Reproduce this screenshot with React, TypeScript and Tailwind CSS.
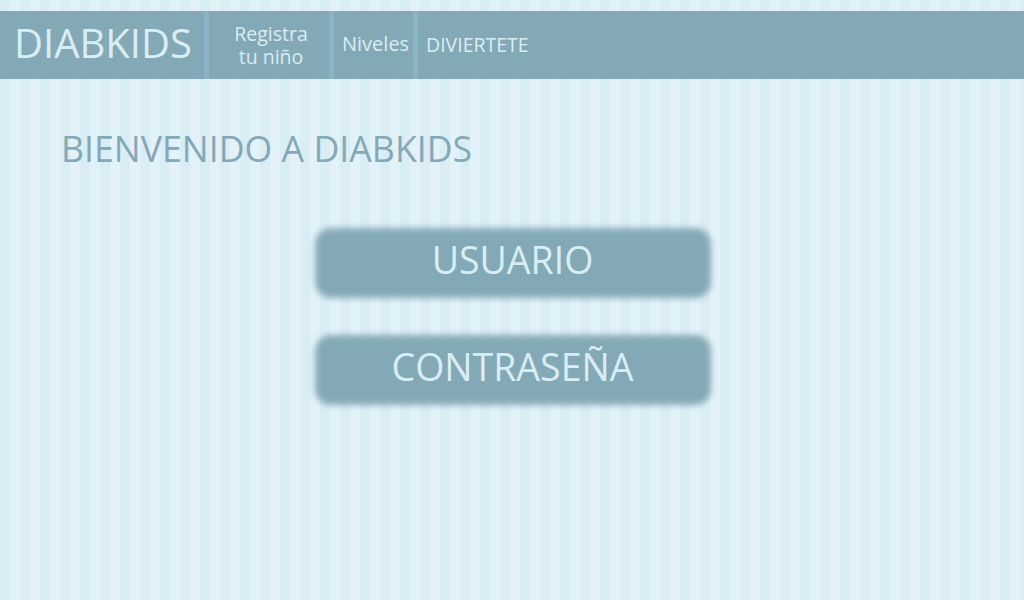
const STRIPES =
  "bg-[repeating-linear-gradient(90deg,#d9edf5_0px,#d9edf5_10px,#e3f2f9_10px,#e3f2f9_20px)]";

function Sep() {
  return <div className="w-[5px] self-stretch bg-[#88b5c7]" />;
}

function Field({ label }: { label: string }) {
  return (
    <div className="relative flex h-[70px] w-[396px] items-center justify-center pb-[5px]">
      <div className="absolute inset-0 rounded-[16px] bg-[#84a9b6] blur-[3px]" />
      <span className="relative text-[37.5px] leading-none text-[#d9edf4]">{label}</span>
    </div>
  );
}

export default function App() {
  return (
    <div
      className={`h-[600px] w-full overflow-hidden pt-[11px] ${STRIPES}`}
      style={{ fontFamily: '"Open Sans", "DejaVu Sans", sans-serif' }}
    >
      <nav className="flex h-[68px] items-stretch bg-[#84a9b6] text-[#d9edf4]">
        <div className="flex w-[204px] items-center pb-[5px] pl-[14px]">
          <span className="text-[40px] leading-none">DIABKIDS</span>
        </div>
        <Sep />
        <div className="flex w-[120px] flex-col items-center justify-center pb-[1px] pl-[4px] text-[19.5px] leading-[23px]">
          <span>Registra</span>
          <span>tu niño</span>
        </div>
        <Sep />
        <div className="flex w-[79px] items-center pb-[3px] pl-[8px] text-[20px]">Niveles</div>
        <Sep />
        <div className="flex items-center pl-[8px] text-[19.5px]">DIVIERTETE</div>
      </nav>

      <h1 className="mt-[52px] pl-[61px] text-[35.7px] leading-none text-[#84a9b6]">
        BIENVENIDO A DIABKIDS
      </h1>

      <div className="mt-[61px] flex flex-col items-center gap-[37px] pl-[1px]">
        <Field label="USUARIO" />
        <Field label="CONTRASEÑA" />
      </div>
    </div>
  );
}
